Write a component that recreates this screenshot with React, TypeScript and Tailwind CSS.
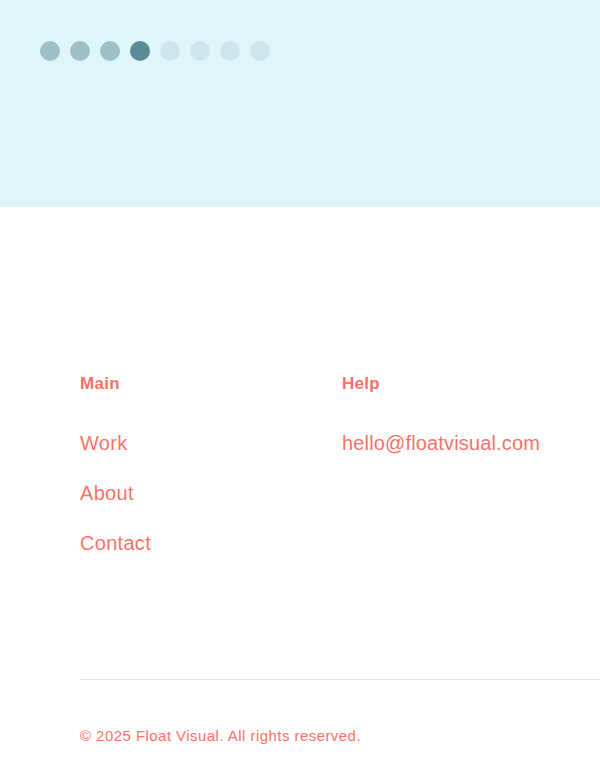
const steps = 8;
const current = 3;

function Progress() {
  return (
    <div className="flex gap-[10px]">
      {Array.from({ length: steps }, (_, i) => (
        <span
          key={i}
          className={`w-5 h-5 rounded-full ${
            i === current ? "bg-[#5b8b97]" : i < current ? "bg-[#9dc0c9]" : "bg-[#cde6ed]"
          }`}
        />
      ))}
    </div>
  );
}

const mainLinks = ["Work", "About", "Contact"];

export default function App() {
  return (
    <div className="min-h-screen bg-white font-['Liberation_Sans',Arial,sans-serif] text-[#ff7166]">
      {/* Hero band with step dots */}
      <section className="h-[207px] bg-[#e0f5fa] pt-[41px] pl-10">
        <Progress />
      </section>

      <footer className="pt-[165px] pl-20">
        <div className="flex">
          <div className="w-[262px]">
            <h4 className="text-[17px] leading-6 font-bold tracking-[0.3px]">Main</h4>
            <ul className="mt-[33px] flex flex-col gap-[22px]">
              {mainLinks.map((l) => (
                <li key={l}>
                  <a href="#" className="text-xl leading-7 tracking-[0.3px]">
                    {l}
                  </a>
                </li>
              ))}
            </ul>
          </div>
          <div>
            <h4 className="text-[17px] leading-6 font-bold tracking-[0.3px]">Help</h4>
            <ul className="mt-[33px]">
              <li>
                <a href="#" className="text-xl leading-7 tracking-[0.15px]">
                  hello@floatvisual.com
                </a>
              </li>
            </ul>
          </div>
        </div>

        <div className="mt-[122px] border-t border-[#e3e6ea]" />

        <p className="mt-[46px] text-[15px] leading-5 tracking-[0.45px]">© 2025 Float Visual. All rights reserved.</p>
      </footer>
    </div>
  );
}
